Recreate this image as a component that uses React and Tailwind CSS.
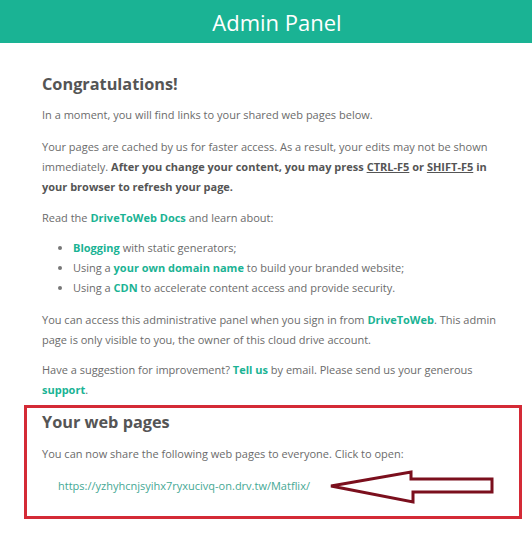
import React from 'react';

const font = { fontFamily: '"Open Sans", "Liberation Sans", sans-serif' };

function Arrow() {
    return (
        <svg
            className="absolute left-[301px] top-[61px]"
            width="167"
            height="36"
            viewBox="0 0 167 36"
            fill="none"
        >
            <path
                d="M3 17 L83 3 L83 10 L164 10 L164 23 L85 23 L85 33 Z"
                fill="#fff"
                stroke="#7b0f1d"
                strokeWidth="3"
                strokeLinejoin="miter"
            />
        </svg>
    );
}

export default function App() {
    return (
        <div className="w-[532px] h-[534px] bg-white overflow-hidden" style={font}>
            {/* Header */}
            <div className="h-[43px] bg-[#1ab394] flex items-center justify-center pl-[22px]">
                <h1 className="text-white text-[22px] leading-none">Admin Panel</h1>
            </div>

            <div className="pl-[24px] pr-[10px] pt-[30px] text-[11px] leading-[20px] text-[#6b6b6b]">
                <div className="pl-[18px] whitespace-nowrap">
                    <h2 className="text-[16.3px] leading-[22px] font-bold text-[#555] mb-[10px]">Congratulations!</h2>

                    <p className="mb-[12px]">In a moment, you will find links to your shared web pages below.</p>

                    <p className="mb-[11px]">
                        Your pages are cached by us for faster access. As a result, your edits may not be shown<br />
                        immediately.{' '}
                        <b className="text-[#555]">
                            After you change your content, you may press <u>CTRL-F5</u> or <u>SHIFT-F5</u> in<br />
                            your browser to refresh your page.
                        </b>
                    </p>

                    <p className="mb-[10px]">
                        Read the <b className="text-[#1ab394]">DriveToWeb Docs</b> and learn about:
                    </p>

                    <ul className="list-disc pl-[31px] mb-[12px] marker:text-[#777]">
                        <li><b className="text-[#1ab394]">Blogging</b> with static generators;</li>
                        <li>Using a <b className="text-[#1ab394]">your own domain name</b> to build your branded website;</li>
                        <li>Using a <b className="text-[#1ab394]">CDN</b> to accelerate content access and provide security.</li>
                    </ul>

                    <p className="mb-[10px]">
                        You can access this administrative panel when you sign in from <b className="text-[#1ab394]">DriveToWeb</b>. This admin<br />
                        page is only visible to you, the owner of this cloud drive account.
                    </p>

                    <p>
                        Have a suggestion for improvement? <b className="text-[#1ab394]">Tell us</b> by email. Please send us your generous<br />
                        <b className="text-[#1ab394]">support</b>.
                    </p>
                </div>

                {/* Highlighted section */}
                <div className="relative mt-[5px] h-[114px] border-[3px] border-[#d42a36] px-[15px] pt-[3px]">
                    <h2 className="text-[16.3px] leading-[22px] font-bold text-[#555] mb-[11px]">Your web pages</h2>
                    <p className="mb-[12px]">You can now share the following web pages to everyone. Click to open:</p>
                    <p className="pl-[16px] text-[11px] text-[#45a894]">https://yzhyhcnjsyihx7ryxucivq-on.drv.tw/Matflix/</p>
                    <Arrow />
                </div>
            </div>
        </div>
    );
}
